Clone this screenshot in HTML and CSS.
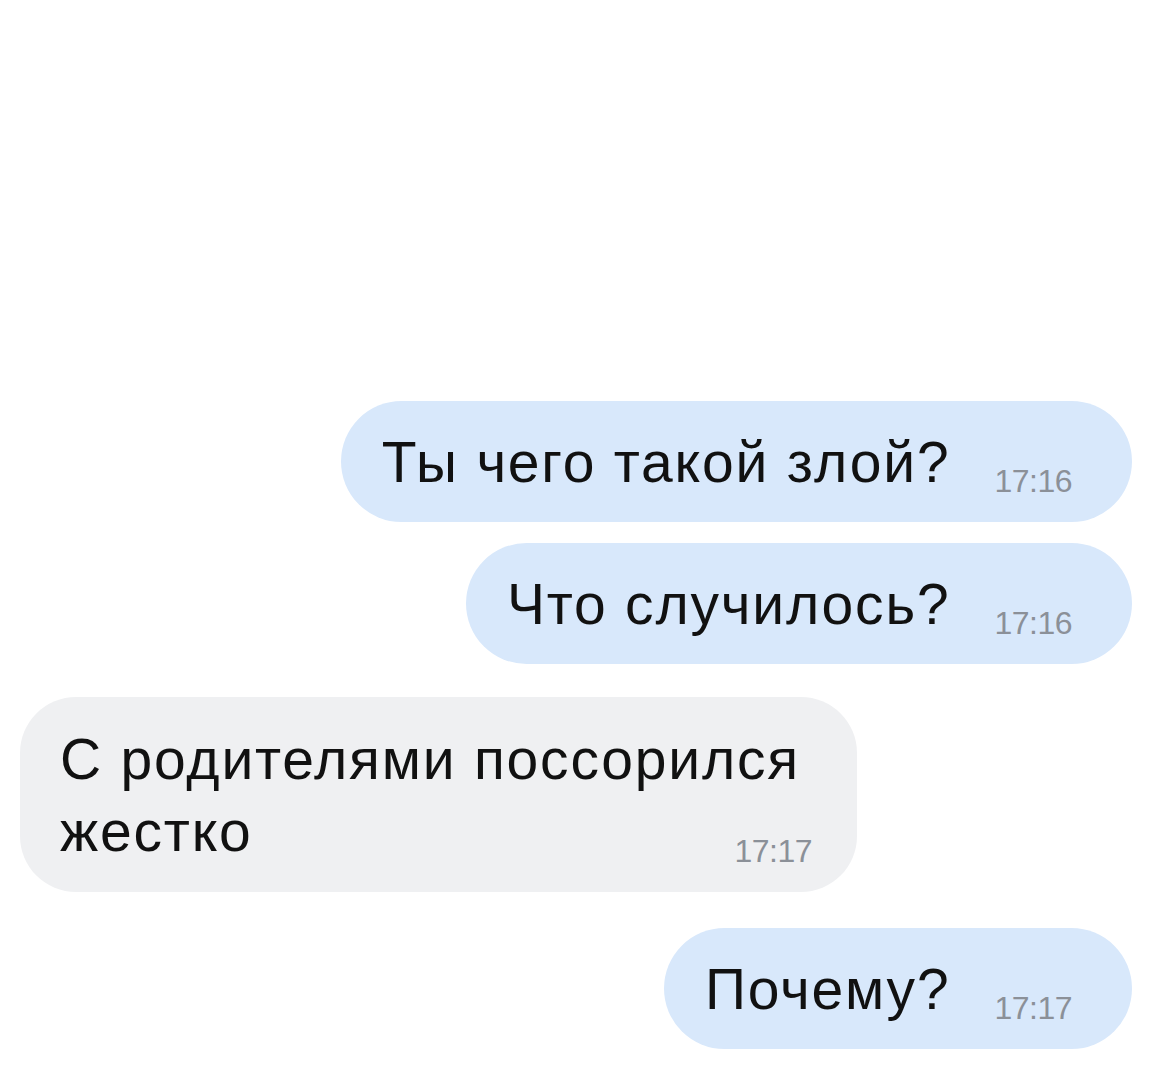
FILE: index.html
```html
<!DOCTYPE html>
<html lang="ru">
<head>
<meta charset="UTF-8">
<meta name="viewport" content="width=device-width, initial-scale=1.0">
<title>Чат</title>
<link rel="stylesheet" href="styles.css">
</head>
<body>
<div class="chat">
    <div class="msg out first">
        <span class="text">Ты чего такой злой?</span>
        <span class="time">17:16</span>
    </div>
    <div class="msg out">
        <span class="text">Что случилось?</span>
        <span class="time">17:16</span>
    </div>
    <div class="msg in">
        <span class="text">С родителями поссорился<br>жестко</span>
        <span class="time">17:17</span>
    </div>
    <div class="msg out">
        <span class="text">Почему?</span>
        <span class="time">17:17</span>
    </div>
</div>
</body>
</html>
```

FILE: styles.css
```css
body {
    margin: 0;
    background: #ffffff;
    font-family: "Liberation Sans", Arial, sans-serif;
}

.chat {
    display: flex;
    flex-direction: column;
    padding: 401px 30px 0 20px;
}

.msg {
    color: #111111;
}

.msg.out {
    display: flex;
    align-items: flex-start;
    align-self: flex-end;
    background: #d8e8fb;
    height: 121px;
    box-sizing: border-box;
    padding: 25px 60px 0 41px;
    margin-top: 21px;
    border-radius: 61px;
}

.msg.out.first {
    margin-top: 0;
}

.msg.in {
    display: grid;
    align-self: flex-start;
    background: #eff0f2;
    padding: 26px 57px 25px 40px;
    margin-top: 33px;
    border-radius: 56px;
}

.msg.in + .msg.out {
    margin-top: 36px;
}

.text {
    font-size: 57px;
    line-height: 72px;
    letter-spacing: 1.8px;
}

.time {
    font-size: 32px;
    line-height: 32px;
    color: #8b9098;
    letter-spacing: -0.5px;
}

.msg.out .time {
    margin-top: 39px;
    margin-left: 44px;
}

.msg.in .text,
.msg.in .time {
    grid-area: 1 / 1;
}

.msg.in .time {
    justify-self: end;
    align-self: end;
    margin-right: -12px;
}
```
